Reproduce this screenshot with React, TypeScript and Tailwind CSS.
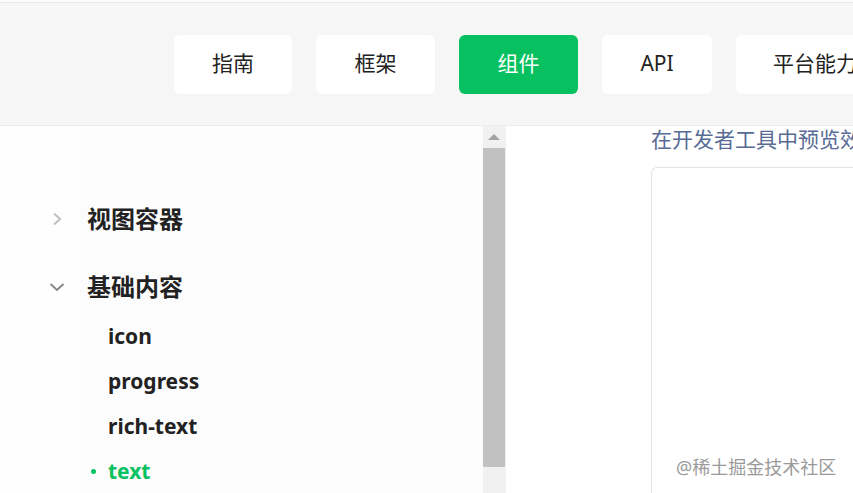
import React from "react";

const font = { fontFamily: '"Noto Sans", "Noto Sans CJK SC", sans-serif' };

function Btn({ label, active, w }: { label: string; active?: boolean; w: string }) {
  return (
    <div
      className={
        w +
        " h-[59px] shrink-0 rounded-[6px] flex items-center justify-center text-[21px] " +
        (active ? "bg-[#07c160] text-white" : "bg-white text-[#222]")
      }
    >
      {label}
    </div>
  );
}

export default function App() {
  return (
    <div className="w-[853px] h-[493px] overflow-hidden relative bg-white" style={font}>
      {/* header */}
      <div className="h-[2px] bg-[#fbfbfb]" />
      <div className="h-[1px] bg-[#ebebeb]" />
      <div className="h-[123px] bg-[#f6f6f6] border-b border-[#ececec] flex items-center pl-[174px] gap-[24px] overflow-hidden">
        <Btn label="指南" w="w-[118px]" />
        <Btn label="框架" w="w-[119px]" />
        <Btn label="组件" w="w-[119px]" active />
        <Btn label="API" w="w-[110px]" />
        <div className="w-[130px] shrink-0 h-[59px] rounded-[6px] bg-white flex items-center pl-[37px] text-[21px] text-[#222] whitespace-nowrap">
          平台能力
        </div>
      </div>

      {/* body */}
      <div className="flex h-[367px]">
        {/* sidebar */}
        <div className="w-[483px] flex bg-[#fcfcfc]">
          <div className="w-[80px] bg-[#fefefe] shrink-0" />
          <div className="flex-1" />
        </div>
        {/* scrollbar */}
        <div className="w-[22px] bg-[#f1f1f1] flex flex-col">
          <div className="h-[22px] flex items-center justify-center">
            <div className="w-0 h-0 border-l-[6px] border-r-[6px] border-b-[6px] border-l-transparent border-r-transparent border-b-[#a3a3a3]" />
          </div>
          <div className="h-[319px] bg-[#c1c1c1]" />
        </div>
        {/* content */}
        <div className="flex-1 bg-white border-l border-[#f2f2f2] pl-[145px] pt-[0px] overflow-hidden">
          <div className="text-[21px] leading-[27px] text-[#576b95] whitespace-nowrap">在开发者工具中预览效果</div>
          <div className="mt-[14px] h-[400px] w-[400px] border-l border-t border-[#e3e3e3] rounded-tl-[6px]" />
        </div>
      </div>

      {/* nav list overlays sidebar */}
      <div className="absolute left-0 top-[203px] w-[483px]">
        <div className="flex items-center h-[32px]">
          <svg className="ml-[51px] w-[12px] h-[14px]" viewBox="0 0 12 14" fill="none" stroke="#c0c0c0" strokeWidth="2">
            <path d="M3 1.5 L9 7 L3 12.5" />
          </svg>
          <span className="ml-[24px] text-[24px] font-bold text-[#222]">视图容器</span>
        </div>
      </div>
      <div className="absolute left-0 top-[271px] w-[483px]">
        <div className="flex items-center h-[32px]">
          <svg className="ml-[49px] w-[16px] h-[10px]" viewBox="0 0 16 10" fill="none" stroke="#888" strokeWidth="2">
            <path d="M1.5 2 L8 8 L14.5 2" />
          </svg>
          <span className="ml-[22px] text-[24px] font-bold text-[#222]">基础内容</span>
        </div>
        <div className="flex flex-col mt-[11px]">
          {["icon", "progress", "rich-text"].map((t) => (
            <div key={t} className="h-[45px] flex items-center pl-[108px] text-[21px] font-bold text-[#222]">
              {t}
            </div>
          ))}
          <div className="h-[45px] flex items-center text-[21px] font-bold text-[#07c160]">
            <span className="ml-[91px] w-[5px] h-[5px] rounded-full bg-[#07c160]" />
            <span className="ml-[12px]">text</span>
          </div>
        </div>
      </div>

      {/* watermark */}
      <div
        className="absolute left-[676px] top-[454px] text-[18px] text-[#9a9a9a] whitespace-nowrap"
        style={{ textShadow: "0 0 2px #fff" }}
      >
        @稀土掘金技术社区
      </div>
    </div>
  );
}
